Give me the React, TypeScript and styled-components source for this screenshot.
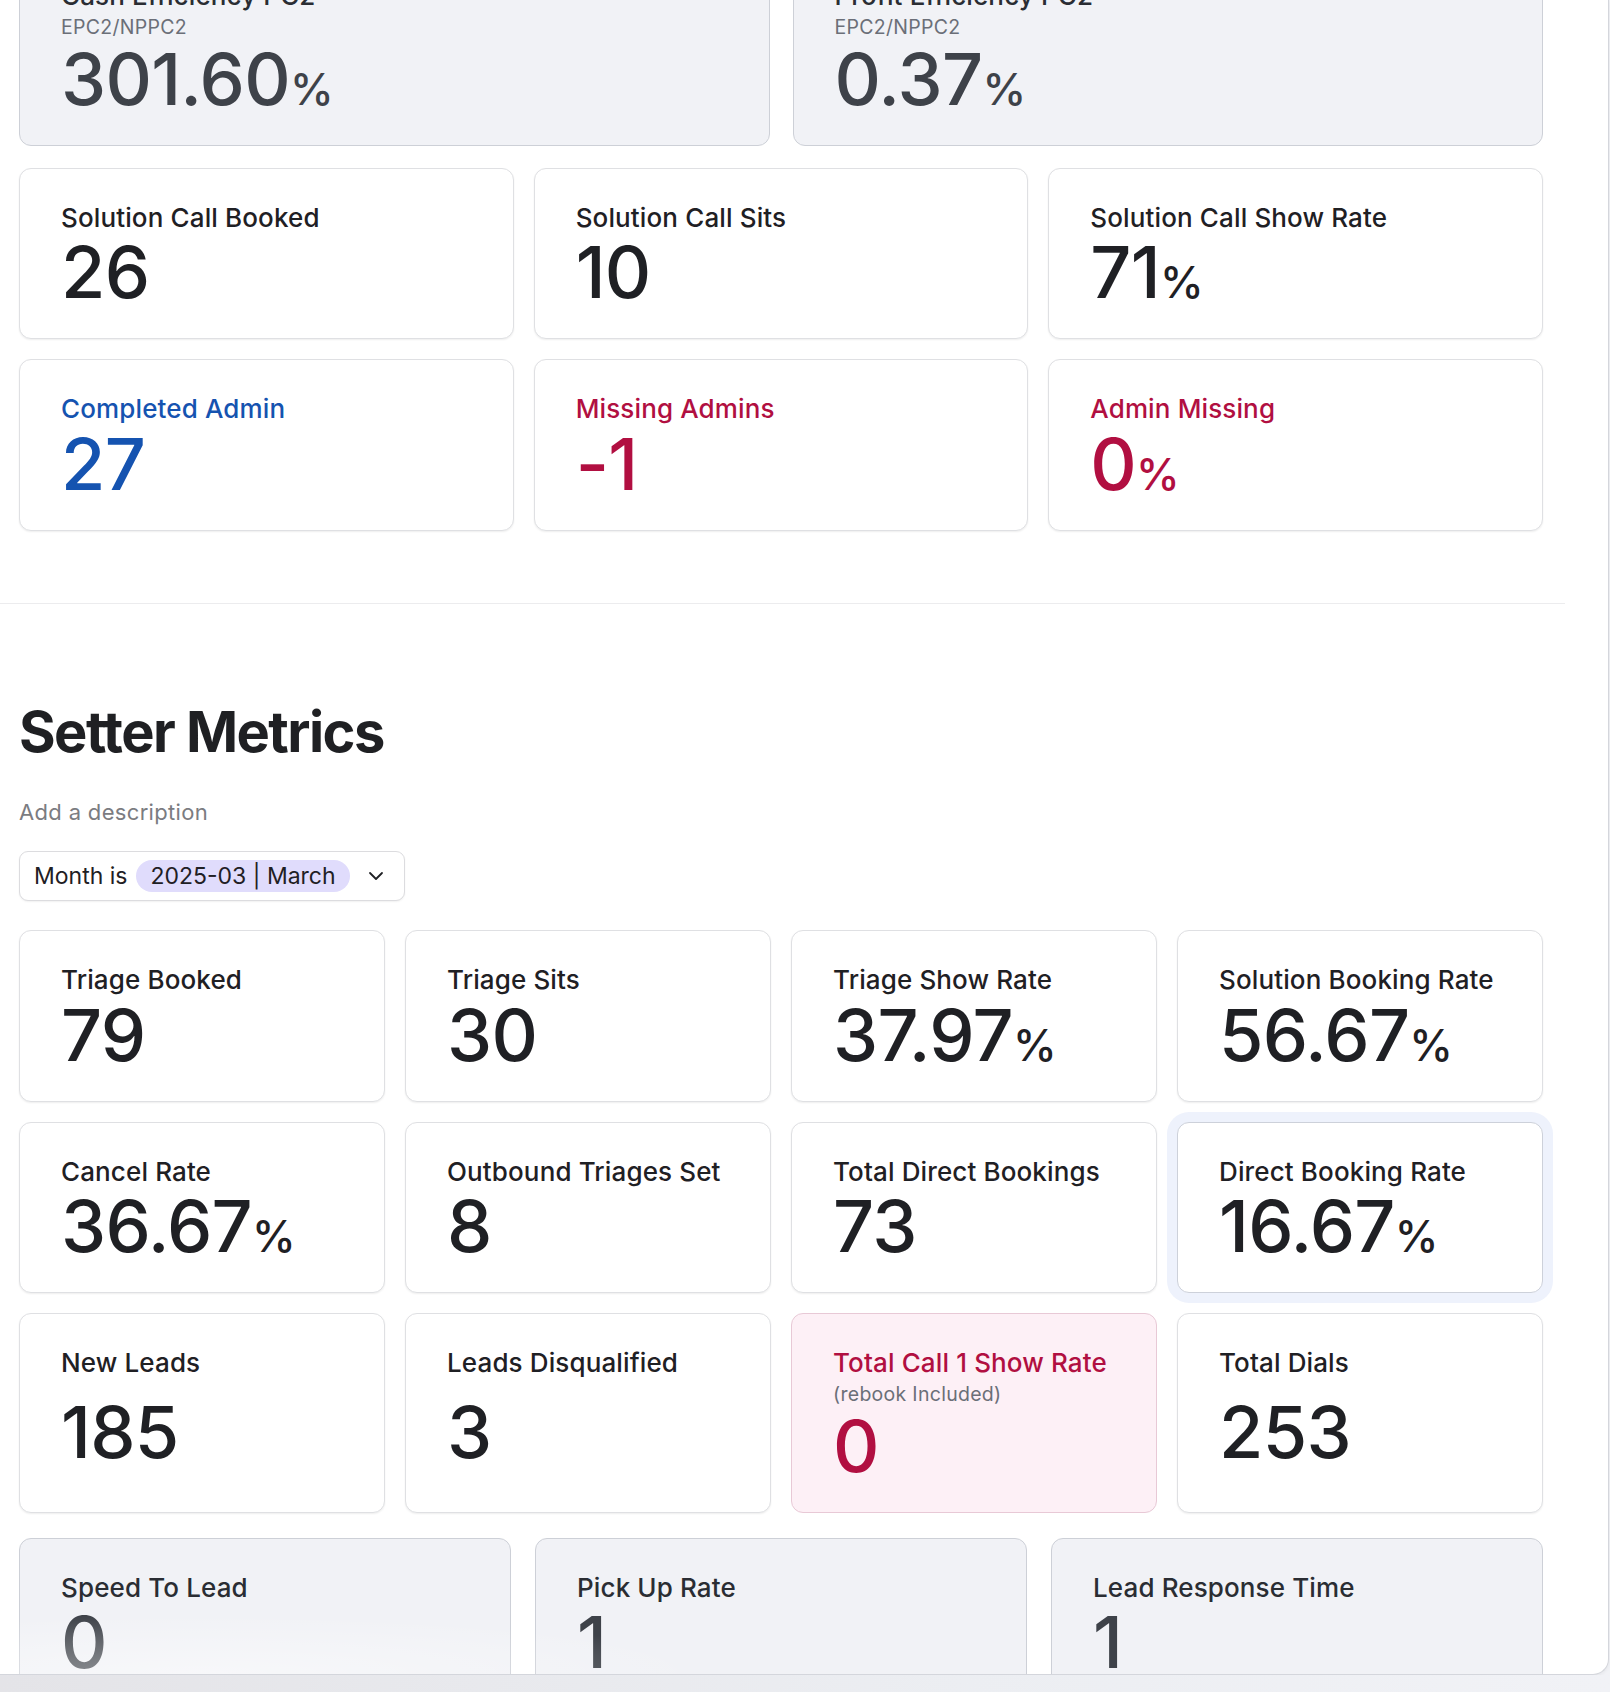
import React from "react";
import styled, { createGlobalStyle, css } from "styled-components";

const GlobalStyle = createGlobalStyle`
  html, body {
    margin: 0;
    padding: 0;
    background: linear-gradient(90deg, #e4e4e8 0%, #eceef2 60%, #f1f2f6 100%);
    font-family: Inter, "Noto Sans", "Liberation Sans", sans-serif;
    color: #1f2024;
  }
  * { box-sizing: border-box; }
`;

type Tone = "default" | "blue" | "red" | "muted";
type Variant = "plain" | "muted" | "alert";

interface Metric {
  label: string;
  value: string;
  sub?: string;
  pct?: boolean;
  tone?: Tone;
  variant?: Variant;
  selected?: boolean;
}

const toneColor: Record<Tone, string> = {
  default: "#1f2024",
  blue: "#1553b0",
  red: "#b10f41",
  muted: "#3e4249",
};

const Panel = styled.div`
  position: relative;
  width: 1609px;
  height: 1675px;
  background: #ffffff;
  border-right: 1px solid #d4d6dc;
  border-bottom: 1px solid #d4d6dc;
  border-bottom-right-radius: 16px;
  box-shadow: 0 1px 4px rgba(0, 0, 0, 0.06);
  overflow: hidden;
`;

const Section = styled.section`
  width: 1524px;
  margin-left: 19px;
  display: flex;
  flex-direction: column;
`;

const Grid = styled.div<{ $cols: number; $gap: number; $mt?: number }>`
  display: grid;
  grid-template-columns: repeat(${(p) => p.$cols}, minmax(0, 1fr));
  column-gap: ${(p) => p.$gap}px;
  row-gap: 20px;
  margin-top: ${(p) => p.$mt ?? 0}px;
`;

const Card = styled.div<{ $variant: Variant; $selected?: boolean }>`
  display: flex;
  flex-direction: column;
  padding: 33px 41px 30px;
  border-radius: 12px;
  border: 1px solid #dfe0e3;
  background: #ffffff;
  box-shadow: 0 1px 2px rgba(0, 0, 0, 0.07);
  ${(p) =>
    p.$variant === "muted" &&
    css`
      background: #f1f2f6;
      border-color: #cdd0d7;
      box-shadow: none;
    `}
  ${(p) =>
    p.$variant === "alert" &&
    css`
      background: #fdf0f6;
      border-color: #e8c9d6;
      box-shadow: none;
    `}
  ${(p) =>
    p.$selected &&
    css`
      border-color: #cdd1da;
      box-shadow: 0 0 0 10px #eef2fc, 0 1px 2px rgba(0, 0, 0, 0.07);
    `}
`;

const Label = styled.div<{ $tone: Tone }>`
  font-size: 26px;
  font-weight: 500;
  line-height: 31.5px;
  letter-spacing: 0.005em;
  color: ${(p) => (p.$tone === "muted" ? "#2a2d33" : toneColor[p.$tone])};
  white-space: nowrap;
`;

const SubLabel = styled.div`
  margin-top: 2px;
  font-size: 19.5px;
  line-height: 26px;
  font-weight: 400;
  color: #6b6f78;
  letter-spacing: 0.015em;
`;

const ValueArea = styled.div`
  flex: 1;
  display: flex;
  align-items: center;
  margin-top: 3px;
`;

const Value = styled.div<{ $tone: Tone }>`
  font-size: 72px;
  line-height: 72px;
  height: 72px;
  font-weight: 500;
  letter-spacing: -0.01em;
  color: ${(p) => toneColor[p.$tone]};
  white-space: nowrap;
`;

const Pct = styled.span`
  font-size: 44px;
  line-height: 1;
  letter-spacing: 0;
`;

const TopGrid = styled(Grid)`
  margin-top: -54px;
`;

const Divider = styled.hr`
  width: 1565px;
  height: 1px;
  margin: 72px 0 0;
  border: none;
  background: #ececee;
`;

const Heading = styled.h2`
  margin: 94px 0 0;
  font-size: 56px;
  line-height: 68px;
  font-weight: 700;
  letter-spacing: -0.028em;
  color: #1f2023;
`;

const Description = styled.p`
  margin: 33px 0 0;
  font-size: 22px;
  line-height: 26.6px;
  letter-spacing: 0.015em;
  color: #7b7c81;
`;

const FilterButton = styled.button`
  align-self: flex-start;
  margin-top: 26px;
  height: 50px;
  width: 386px;
  display: flex;
  align-items: center;
  padding: 0 20px 0 14px;
  border: 1px solid #dcdcdf;
  border-radius: 9px;
  background: #ffffff;
  box-shadow: 0 1px 2px rgba(0, 0, 0, 0.06);
  font-family: inherit;
  font-size: 23px;
  color: #1f2024;
  cursor: pointer;
`;

const FilterText = styled.span`
  white-space: nowrap;
`;

const Badge = styled.span`
  display: inline-flex;
  align-items: center;
  height: 32px;
  margin-left: 9px;
  padding: 0 14px;
  border-radius: 16px;
  background: #e0dcfc;
  color: #1f2024;
  white-space: nowrap;
`;

const Chevron = styled.svg`
  margin-left: auto;
  width: 16px;
  height: 10px;
  flex: none;
`;

const SetterGrid = styled(Grid)`
  margin-top: 29px;
`;

const BottomFade = styled.div`
  position: absolute;
  left: 0;
  right: 0;
  bottom: 0;
  height: 60px;
  pointer-events: none;
  background: radial-gradient(
    ellipse 520px 60px at 200px 100%,
    rgba(255, 255, 255, 0.45),
    rgba(255, 255, 255, 0) 100%
  );
`;

const topCards: Metric[] = [
  { label: "Cash Efficiency PC2", sub: "EPC2/NPPC2", value: "301.60", pct: true, tone: "muted", variant: "muted" },
  { label: "Profit Efficiency PC2", sub: "EPC2/NPPC2", value: "0.37", pct: true, tone: "muted", variant: "muted" },
];

const solutionCards: Metric[] = [
  { label: "Solution Call Booked", value: "26" },
  { label: "Solution Call Sits", value: "10" },
  { label: "Solution Call Show Rate", value: "71", pct: true },
  { label: "Completed Admin", value: "27", tone: "blue" },
  { label: "Missing Admins", value: "-1", tone: "red" },
  { label: "Admin Missing", value: "0", pct: true, tone: "red" },
];

const setterCards: Metric[] = [
  { label: "Triage Booked", value: "79" },
  { label: "Triage Sits", value: "30" },
  { label: "Triage Show Rate", value: "37.97", pct: true },
  { label: "Solution Booking Rate", value: "56.67", pct: true },
  { label: "Cancel Rate", value: "36.67", pct: true },
  { label: "Outbound Triages Set", value: "8" },
  { label: "Total Direct Bookings", value: "73" },
  { label: "Direct Booking Rate", value: "16.67", pct: true, selected: true },
  { label: "New Leads", value: "185" },
  { label: "Leads Disqualified", value: "3" },
  { label: "Total Call 1 Show Rate", sub: "(rebook Included)", value: "0", tone: "red", variant: "alert" },
  { label: "Total Dials", value: "253" },
];

const speedCards: Metric[] = [
  { label: "Speed To Lead", value: "0", tone: "muted", variant: "muted" },
  { label: "Pick Up Rate", value: "1", tone: "muted", variant: "muted" },
  { label: "Lead Response Time", value: "1", tone: "muted", variant: "muted" },
];

function MetricCard({ m }: { m: Metric }) {
  const tone = m.tone ?? "default";
  return (
    <Card $variant={m.variant ?? "plain"} $selected={m.selected}>
      <Label $tone={tone}>{m.label}</Label>
      {m.sub && <SubLabel>{m.sub}</SubLabel>}
      <ValueArea>
        <Value $tone={tone}>
          {m.value}
          {m.pct && <Pct>%</Pct>}
        </Value>
      </ValueArea>
    </Card>
  );
}

export default function App() {
  return (
    <>
      <GlobalStyle />
      <Panel>
        <Section>
          <TopGrid $cols={2} $gap={23}>
            {topCards.map((m) => (
              <MetricCard key={m.label} m={m} />
            ))}
          </TopGrid>
          <Grid $cols={3} $gap={20} $mt={22}>
            {solutionCards.map((m) => (
              <MetricCard key={m.label} m={m} />
            ))}
          </Grid>
        </Section>
        <Divider />
        <Section>
          <Heading>Setter Metrics</Heading>
          <Description>Add a description</Description>
          <FilterButton type="button">
            <FilterText>Month is</FilterText>
            <Badge>2025-03 | March</Badge>
            <Chevron viewBox="0 0 16 10" fill="none">
              <path d="M2 2l6 6 6-6" stroke="#1f2024" strokeWidth="1.8" strokeLinecap="round" strokeLinejoin="round" />
            </Chevron>
          </FilterButton>
          <SetterGrid $cols={4} $gap={20}>
            {setterCards.map((m) => (
              <MetricCard key={m.label} m={m} />
            ))}
          </SetterGrid>
          <Grid $cols={3} $gap={24} $mt={25}>
            {speedCards.map((m) => (
              <MetricCard key={m.label} m={m} />
            ))}
          </Grid>
        </Section>
        <BottomFade />
      </Panel>
    </>
  );
}
